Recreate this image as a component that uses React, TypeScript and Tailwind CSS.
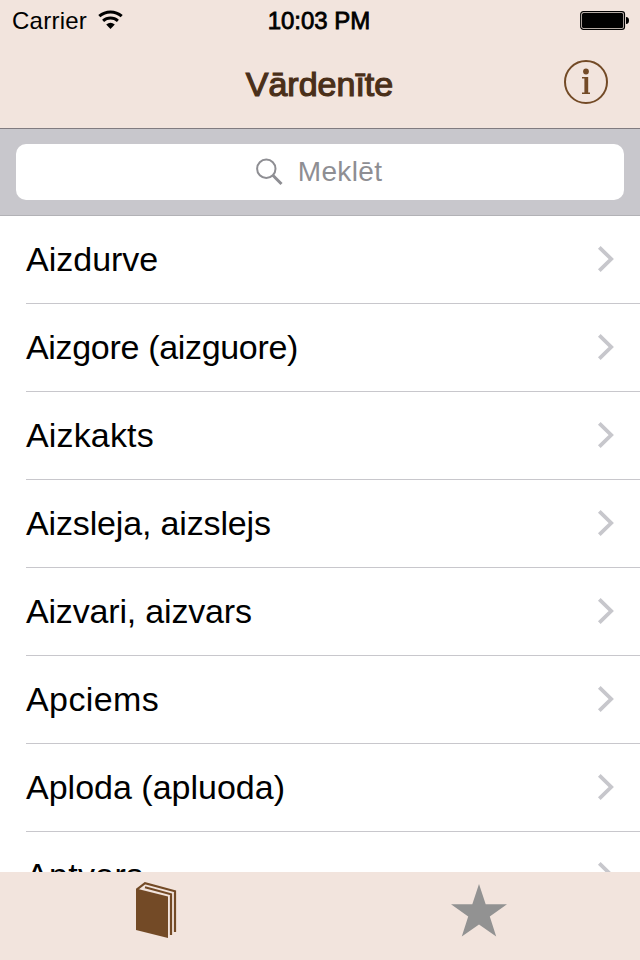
import { useState } from "react";

interface Entry {
  title: string;
  tracking: string;
}

const entries: Entry[] = [
  { title: "Aizdurve", tracking: "tracking-normal" },
  { title: "Aizgore (aizguore)", tracking: "tracking-[-0.32px]" },
  { title: "Aizkakts", tracking: "tracking-[0.15px]" },
  { title: "Aizsleja, aizslejs", tracking: "tracking-[-0.15px]" },
  { title: "Aizvari, aizvars", tracking: "tracking-[-0.18px]" },
  { title: "Apciems", tracking: "tracking-[0.4px]" },
  { title: "Aploda (apluoda)", tracking: "tracking-normal" },
  { title: "Aptvars", tracking: "tracking-[0.3px]" },
];

function WifiIcon() {
  return (
    <svg width="26" height="20" viewBox="0 0 26 20" fill="none">
      <path d="M1.3 6.2A17 17 0 0 1 23.7 6.2" stroke="#000" strokeWidth="3" />
      <path d="M5.1 10.8A11.2 11.2 0 0 1 19.9 10.8" stroke="#000" strokeWidth="3" />
      <path d="M8.2 14.6Q12.5 11 16.8 14.6L12.5 19Z" fill="#000" />
    </svg>
  );
}

function BatteryIcon() {
  return (
    <svg width="50" height="20" viewBox="0 0 50 20">
      <rect x="0.7" y="1.7" width="43.8" height="17.6" rx="2.6" fill="none" stroke="#000" strokeWidth="1.2" />
      <rect x="2" y="3" width="41.2" height="15" rx="1.5" fill="#000" />
      <path d="M46 7C48.2 7.2 49 8.4 49 10.5S48.2 13.8 46 14Z" fill="#000" />
    </svg>
  );
}

function InfoIcon() {
  return (
    <svg width="44" height="44" viewBox="0 0 44 44">
      <circle cx="22" cy="22" r="21" fill="none" stroke="#734a26" strokeWidth="2" />
      <circle cx="22" cy="11.5" r="2.9" fill="#734a26" />
      <path d="M18 17H24.2V32.6H26V34H18V32.6H20.4V18.4H18Z" fill="#734a26" />
    </svg>
  );
}

function SearchIcon() {
  return (
    <svg width="28" height="28" viewBox="0 0 28 28" fill="none" stroke="#8e8e93">
      <circle cx="10.3" cy="10.8" r="9.2" strokeWidth="2" />
      <path d="M16.8 17.3L25.5 26" strokeWidth="3" />
    </svg>
  );
}

function Chevron() {
  return (
    <svg width="18" height="28" viewBox="0 0 18 28" fill="none">
      <path d="M2.3 2.3L14.2 14L2.3 25.7" stroke="#c7c7cc" strokeWidth="3.8" />
    </svg>
  );
}

function BookIcon() {
  return (
    <svg width="42" height="58" viewBox="0 0 42 58" fill="none">
      <path d="M0 6.5L32 14.5V56L0 48V6.5Z" fill="#734a26" />
      <path d="M1 7.3L9 1.2L39 9.3V50" stroke="#734a26" strokeWidth="2.2" />
      <path d="M9 5.2L35 12.3V53" stroke="#734a26" strokeWidth="2.2" />
    </svg>
  );
}

function StarIcon() {
  return (
    <svg width="56" height="54" viewBox="0 0 56 54">
      <path d="M28 0L34.7 20.2H56L38.8 32.5L45.2 52.5L28 40.4L10.8 52.5L17.2 32.5L0 20.2H21.3Z" fill="#929292" />
    </svg>
  );
}

function StatusBar() {
  return (
    <div className="grid h-10 grid-cols-3 items-center pl-3 pr-2.5 text-[24px] leading-[38px] text-black">
      <div className="flex items-center gap-[11px]">
        <span className="pt-0.5 tracking-[0.25px]">Carrier</span>
        <WifiIcon />
      </div>
      <span className="pt-0.5 pr-1 text-center [-webkit-text-stroke:0.8px_#000]">10:03 PM</span>
      <div className="flex justify-end">
        <BatteryIcon />
      </div>
    </div>
  );
}

export default function App() {
  const [tab, setTab] = useState("words");

  return (
    <div className="flex h-[960px] w-[640px] flex-col overflow-hidden bg-white font-['Liberation_Sans',Arial,sans-serif]">
      <header className="h-[129px] shrink-0 border-b border-[#817b80] bg-[#f2e4dd]">
        <StatusBar />
        <div className="grid h-[88px] grid-cols-[1fr_auto_1fr] items-center pr-8">
          <span />
          <h1 className="pl-[31px] text-[34px] leading-[88px] text-[#4a2f19] [-webkit-text-stroke:1.2px_#4a2f19]">Vārdenīte</h1>
          <button className="mb-[5px] justify-self-end" aria-label="Info">
            <InfoIcon />
          </button>
        </div>
      </header>

      <div className="h-[87px] shrink-0 border-b border-[#b2b2b6] bg-[#c8c7cc] px-4 pt-[15px]">
        <div className="flex h-14 items-center justify-center gap-[14px] rounded-[10px] bg-white pr-0.5 text-[28px] text-[#8e8e93]">
          <SearchIcon />
          <span className="tracking-[0.35px]">Meklēt</span>
        </div>
      </div>

      <ul className="min-h-0 flex-1 overflow-hidden pl-[26px]">
        {entries.map((entry) => (
          <li key={entry.title} className="flex h-[88px] items-center justify-between border-b border-[#c8c7cc] pr-[25px] text-[34px] text-black">
            <span className={entry.tracking}>{entry.title}</span>
            <span className="pb-0.5">
              <Chevron />
            </span>
          </li>
        ))}
      </ul>

      <nav className="grid h-[88px] shrink-0 grid-cols-2 bg-[#f2e4dd]">
        <button className="flex justify-center pt-[10px] pr-1.5" aria-label="Words" aria-pressed={tab === "words"} onClick={() => setTab("words")}>
          <BookIcon />
        </button>
        <button className="flex justify-center pt-3 pr-0.5" aria-label="Favorites" aria-pressed={tab === "favorites"} onClick={() => setTab("favorites")}>
          <StarIcon />
        </button>
      </nav>
    </div>
  );
}
